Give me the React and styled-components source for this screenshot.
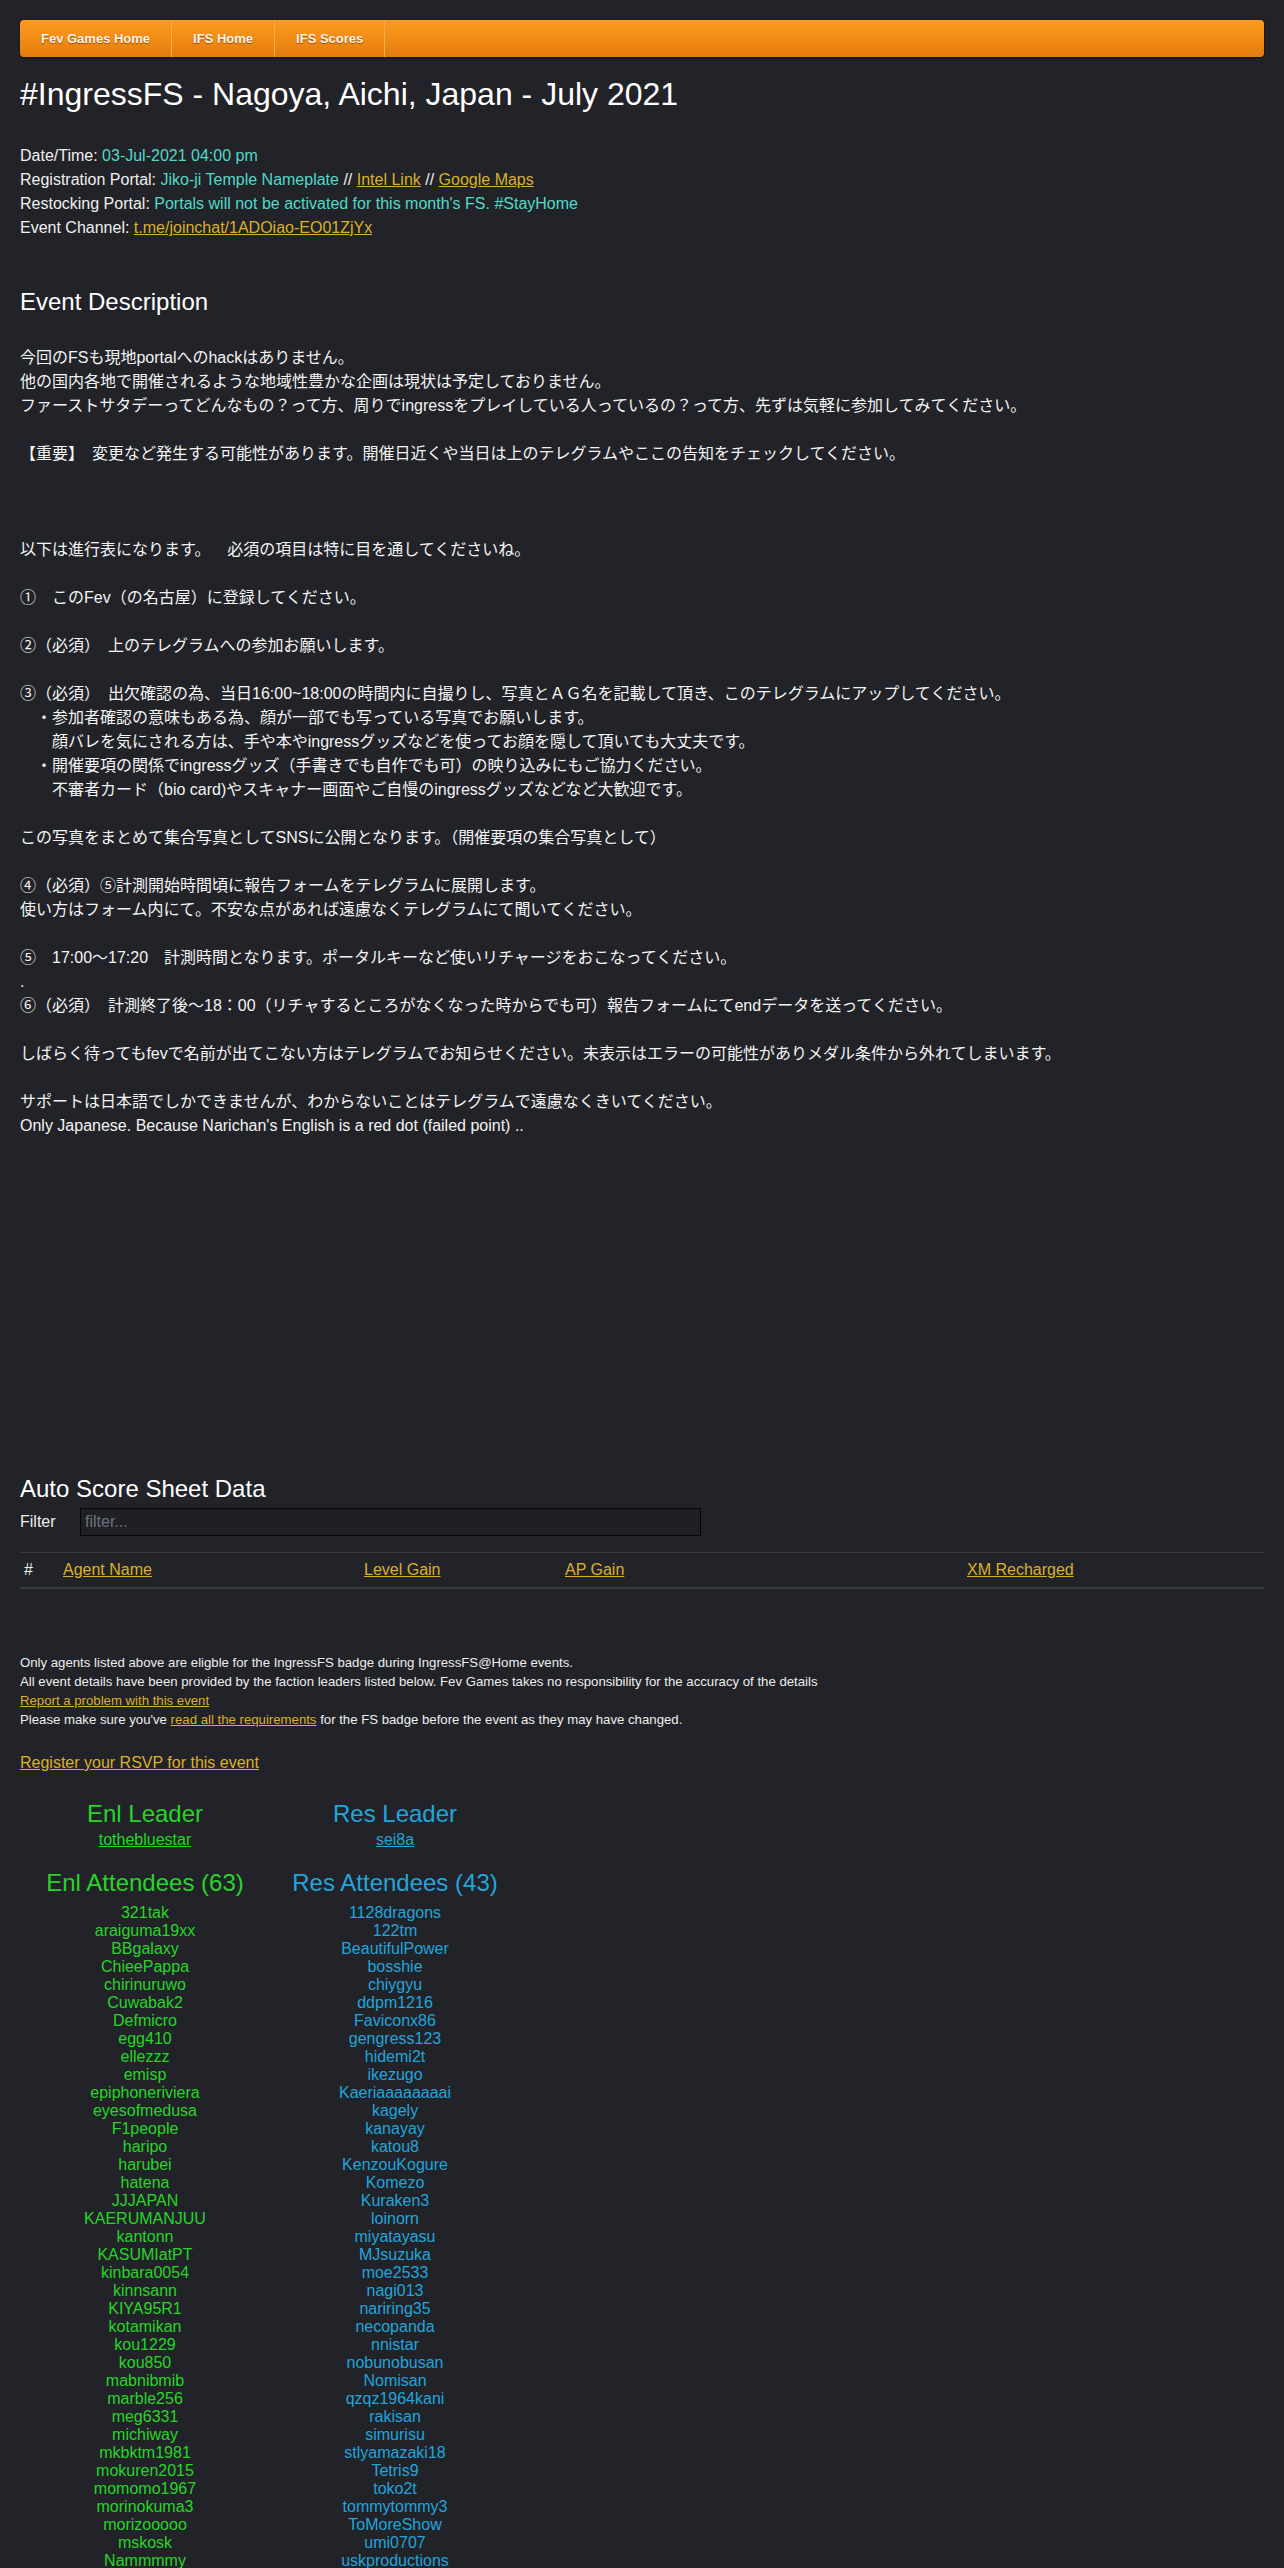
import React from "react";
import styled, { createGlobalStyle } from "styled-components";

const GlobalStyle = createGlobalStyle`
  html, body {
    margin: 0;
    padding: 0;
    background: #212328;
  }
  body {
    color: #eeeeee;
    font-family: "Liberation Sans", Arial, "Noto Sans CJK JP", sans-serif;
    font-size: 16px;
  }
`;

const Page = styled.div`
  padding: 20px 20px 0;
  min-height: 2568px;
  box-sizing: border-box;
`;

const NavBar = styled.nav`
  display: flex;
  height: 37px;
  border-radius: 4px;
  background: linear-gradient(to bottom, #fb9c20 0%, #f18a14 55%, #e27b0f 100%);
  box-shadow: 0 0 0 1px rgba(40, 20, 0, 0.55), 0 1px 2px rgba(0, 0, 0, 0.5);
`;

const NavItem = styled.a`
  display: flex;
  align-items: center;
  padding: 0 21px;
  border-right: 1px solid #f7ad4c;
  color: #fdf3e6;
  font-size: 13px;
  font-weight: bold;
  text-decoration: none;
  text-shadow: 0 1px 1px rgba(90, 40, 0, 0.6);
  cursor: pointer;
`;

const Title = styled.h1`
  margin: 19px 0 0;
  font-size: 32px;
  line-height: 36px;
  font-weight: normal;
  color: #ffffff;
`;

const InfoBlock = styled.div`
  margin-top: 32px;
`;

const InfoLine = styled.div`
  line-height: 24px;
  color: #f0f0f0;
`;

const Value = styled.span`
  color: #52d9c8;
`;

const Link = styled.a`
  color: #dcb02a;
  text-decoration: underline;
  cursor: pointer;
`;

const SectionTitle = styled.h2`
  margin: ${(props) => props.top || 48}px 0 0;
  font-size: 24px;
  line-height: 28px;
  font-weight: normal;
  color: #ffffff;
`;

const Description = styled.div`
  margin-top: 30px;
`;

const DescLine = styled.div`
  line-height: 24px;
  min-height: 24px;
  white-space: pre;
  color: #f4f4f4;
`;

const EmbedArea = styled.div`
  height: 317px;
`;

const FilterRow = styled.div`
  display: flex;
  align-items: center;
  margin-top: 5px;
`;

const FilterLabel = styled.label`
  width: 60px;
  color: #eeeeee;
`;

const FilterInput = styled.input`
  width: 621px;
  height: 28px;
  box-sizing: border-box;
  padding: 0 4px;
  background: #1e2024;
  border: 1px solid #050505;
  color: #ddd;
  font-family: "Liberation Sans", Arial, sans-serif;
  font-size: 16px;
  outline: none;

  &::placeholder {
    color: #6f7278;
  }
`;

const ScoreTable = styled.table`
  width: 1244px;
  margin-top: 16px;
  border-collapse: collapse;
  table-layout: fixed;
`;

const Th = styled.th`
  width: ${(props) => props.w - 8}px;
  padding: 8px 4px;
  line-height: 18px;
  font-size: 16px;
  font-weight: normal;
  text-align: left;
  color: #eeeeee;
  border-top: 1px solid #383b42;
  border-bottom: 2px solid #383b42;
`;

const Notes = styled.div`
  margin-top: 64px;
  font-size: 13.2px;
  line-height: 19px;
  color: #eeeeee;
`;

const Rsvp = styled.div`
  margin-top: 25px;
  line-height: 18px;
`;

const Factions = styled.div`
  display: grid;
  grid-template-columns: 250px 250px;
  margin-top: 28px;
`;

const FactionColumn = styled.div`
  display: flex;
  flex-direction: column;
  align-items: center;
  text-align: center;
  color: ${(props) => props.color};
`;

const FactionHeading = styled.div`
  margin-top: ${(props) => props.top || 0}px;
  font-size: 24px;
  line-height: 27px;
`;

const LeaderName = styled.a`
  margin-top: 4px;
  line-height: 18px;
  color: inherit;
  text-decoration: underline;
  cursor: pointer;
`;

const NameList = styled.div`
  margin-top: 8px;
`;

const AgentName = styled.div`
  line-height: 18px;
`;

const ENL = "#27d527";
const RES = "#22a5dc";

const descLines = [
  "今回のFSも現地portalへのhackはありません。",
  "他の国内各地で開催されるような地域性豊かな企画は現状は予定しておりません。",
  "ファーストサタデーってどんなもの？って方、周りでingressをプレイしている人っているの？って方、先ずは気軽に参加してみてください。",
  "",
  "【重要】　変更など発生する可能性があります。開催日近くや当日は上のテレグラムやここの告知をチェックしてください。",
  "",
  "",
  "",
  "以下は進行表になります。　  必須の項目は特に目を通してくださいね。",
  "",
  "①　このFev（の名古屋）に登録してください。",
  "",
  "②（必須）　上のテレグラムへの参加お願いします。",
  "",
  "③（必須）　出欠確認の為、当日16:00~18:00の時間内に自撮りし、写真とＡＧ名を記載して頂き、このテレグラムにアップしてください。",
  "　・参加者確認の意味もある為、顔が一部でも写っている写真でお願いします。",
  "　　顔バレを気にされる方は、手や本やingressグッズなどを使ってお顔を隠して頂いても大丈夫です。",
  "　・開催要項の関係でingressグッズ（手書きでも自作でも可）の映り込みにもご協力ください。",
  "　　不審者カード（bio card)やスキャナー画面やご自慢のingressグッズなどなど大歓迎です。",
  "",
  "この写真をまとめて集合写真としてSNSに公開となります。（開催要項の集合写真として）",
  "",
  "④（必須）⑤計測開始時間頃に報告フォームをテレグラムに展開します。",
  "使い方はフォーム内にて。不安な点があれば遠慮なくテレグラムにて聞いてください。",
  "",
  "⑤　17:00～17:20　計測時間となります。ポータルキーなど使いリチャージをおこなってください。",
  ".",
  "⑥（必須）　計測終了後～18：00（リチャするところがなくなった時からでも可）報告フォームにてendデータを送ってください。",
  "",
  "しばらく待ってもfevで名前が出てこない方はテレグラムでお知らせください。未表示はエラーの可能性がありメダル条件から外れてしまいます。",
  "",
  "サポートは日本語でしかできませんが、わからないことはテレグラムで遠慮なくきいてください。",
  "Only Japanese. Because Narichan's English is a red dot (failed point) ..",
];

const enlAgents = [
  "321tak", "araiguma19xx", "BBgalaxy", "ChieePappa", "chirinuruwo", "Cuwabak2",
  "Defmicro", "egg410", "ellezzz", "emisp", "epiphoneriviera", "eyesofmedusa",
  "F1people", "haripo", "harubei", "hatena", "JJJAPAN", "KAERUMANJUU", "kantonn",
  "KASUMIatPT", "kinbara0054", "kinnsann", "KIYA95R1", "kotamikan", "kou1229",
  "kou850", "mabnibmib", "marble256", "meg6331", "michiway", "mkbktm1981",
  "mokuren2015", "momomo1967", "morinokuma3", "morizooooo", "mskosk", "Nammmmy",
];

const resAgents = [
  "1128dragons", "122tm", "BeautifulPower", "bosshie", "chiygyu", "ddpm1216",
  "Faviconx86", "gengress123", "hidemi2t", "ikezugo", "Kaeriaaaaaaaai", "kagely",
  "kanayay", "katou8", "KenzouKogure", "Komezo", "Kuraken3", "loinorn",
  "miyatayasu", "MJsuzuka", "moe2533", "nagi013", "nariring35", "necopanda",
  "nnistar", "nobunobusan", "Nomisan", "qzqz1964kani", "rakisan", "simurisu",
  "stlyamazaki18", "Tetris9", "toko2t", "tommytommy3", "ToMoreShow", "umi0707",
  "uskproductions",
];

const columns = [
  { label: "#", w: 39 },
  { label: "Agent Name", w: 301, link: true },
  { label: "Level Gain", w: 201, link: true },
  { label: "AP Gain", w: 402, link: true },
  { label: "XM Recharged", w: 301, link: true },
];

const Faction = ({ color, leaderTitle, leader, attendeesTitle, agents }) => (
  <FactionColumn color={color}>
    <FactionHeading>{leaderTitle}</FactionHeading>
    <LeaderName>{leader}</LeaderName>
    <FactionHeading top={20}>{attendeesTitle}</FactionHeading>
    <NameList>
      {agents.map((name) => (
        <AgentName key={name}>{name}</AgentName>
      ))}
    </NameList>
  </FactionColumn>
);

const App = () => {
  return (
    <>
      <GlobalStyle />
      <Page>
        <NavBar>
          <NavItem>Fev Games Home</NavItem>
          <NavItem>IFS Home</NavItem>
          <NavItem>IFS Scores</NavItem>
        </NavBar>

        <Title>#IngressFS - Nagoya, Aichi, Japan - July 2021</Title>

        <InfoBlock>
          <InfoLine>
            Date/Time: <Value>03-Jul-2021 04:00 pm</Value>
          </InfoLine>
          <InfoLine>
            Registration Portal: <Value>Jiko-ji Temple Nameplate</Value> //{" "}
            <Link>Intel Link</Link> // <Link>Google Maps</Link>
          </InfoLine>
          <InfoLine>
            Restocking Portal:{" "}
            <Value>Portals will not be activated for this month's FS. #StayHome</Value>
          </InfoLine>
          <InfoLine>
            Event Channel: <Link>t.me/joinchat/1ADOiao-EO01ZjYx</Link>
          </InfoLine>
        </InfoBlock>

        <SectionTitle>Event Description</SectionTitle>
        <Description>
          {descLines.map((line, i) => (
            <DescLine key={i}>{line}</DescLine>
          ))}
        </Description>

        <EmbedArea />

        <SectionTitle top={20}>Auto Score Sheet Data</SectionTitle>
        <FilterRow>
          <FilterLabel>Filter</FilterLabel>
          <FilterInput placeholder="filter..." />
        </FilterRow>

        <ScoreTable>
          <thead>
            <tr>
              {columns.map((c) => (
                <Th key={c.label} w={c.w}>
                  {c.link ? <Link>{c.label}</Link> : c.label}
                </Th>
              ))}
            </tr>
          </thead>
          <tbody />
        </ScoreTable>

        <Notes>
          <div>Only agents listed above are eligble for the IngressFS badge during IngressFS@Home events.</div>
          <div>
            All event details have been provided by the faction leaders listed below. Fev Games takes no
            responsibility for the accuracy of the details
          </div>
          <div>
            <Link>Report a problem with this event</Link>
          </div>
          <div>
            Please make sure you've <Link>read all the requirements</Link> for the FS badge before the event as
            they may have changed.
          </div>
        </Notes>

        <Rsvp>
          <Link>Register your RSVP for this event</Link>
        </Rsvp>

        <Factions>
          <Faction
            color={ENL}
            leaderTitle="Enl Leader"
            leader="tothebluestar"
            attendeesTitle="Enl Attendees (63)"
            agents={enlAgents}
          />
          <Faction
            color={RES}
            leaderTitle="Res Leader"
            leader="sei8a"
            attendeesTitle="Res Attendees (43)"
            agents={resAgents}
          />
        </Factions>
      </Page>
    </>
  );
};

export default App;
